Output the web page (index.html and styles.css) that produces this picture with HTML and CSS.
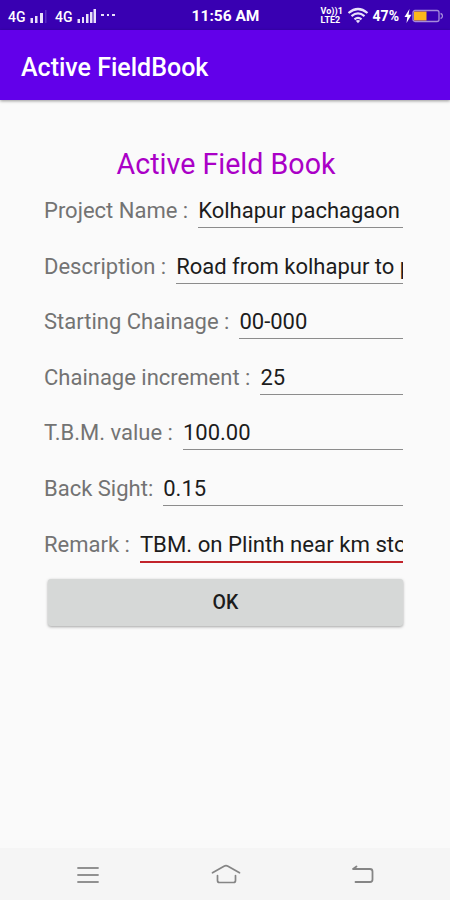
FILE: index.html
```html
<!DOCTYPE html>
<html lang="en">
<head>
  <meta charset="UTF-8" />
  <meta name="viewport" content="width=device-width, initial-scale=1.0"/>
  <title>Active FieldBook</title>
  <link rel="stylesheet" href="styles.css">
</head>
<body>
  <!-- Status bar -->
  <div class="status-bar">
    <div class="status-left">
      <span class="network">4G</span>
      <svg class="signal" width="18" height="16" viewBox="0 0 18 16">
        <path d="M0.500 10h2.500v5h-2.500zM5 8h2.500v7h-2.500zM10 5h3v10h-3z" fill="#e8e0fa"/>
        <path d="M15 2h1.500v13h-1.500z" fill="#5a2cc2"/>
      </svg>
      <span class="network second">4G</span>
      <svg class="signal" width="20" height="16" viewBox="0 0 20 16">
        <path d="M0.500 11h2.500v4h-2.500zM5 9h2v6h-2zM9 6h2.500v9h-2.500zM13 4h2.500v11h-2.500zM16.500 1h2.500v14h-2.500z" fill="#e8e0fa"/>
      </svg>
      <span class="dots"><i></i><i></i><i></i></span>
    </div>
    <div class="clock">11:56 AM</div>
    <div class="status-right">
      <div class="volte"><span>Vo))1</span><span>LTE2</span></div>
      <svg class="wifi" width="22" height="17" viewBox="0 0 22 17">
        <g fill="none" stroke="#e8e0fa" stroke-width="2.200">
          <path d="M1.500 6q9.500-8 19 0"/>
          <path d="M4.500 9.200q6.500-5.500 13 0"/>
          <path d="M7.500 12.300q3.500-3 7 0"/>
        </g>
        <path d="M8.800 13.700q2.200-1.500 4.400 0l-2.200 2.500z" fill="#e8e0fa"/>
      </svg>
      <span class="percent">47%</span>
      <svg class="bolt" width="8" height="14" viewBox="0 0 8 14">
        <path d="M5.500 0L0.500 8h2.800l-0.800 6l5-8.200h-3z" fill="#fff"/>
      </svg>
      <svg class="battery" width="31" height="14" viewBox="0 0 31 14">
        <rect x="1" y="1.500" width="26" height="11" rx="2" fill="none" stroke="#a58bdc" stroke-width="1.300"/>
        <path d="M28.500 4.500q2 0.500 2 2.500t-2 2.500" fill="none" stroke="#a58bdc" stroke-width="1.300"/>
        <rect x="2" y="2.500" width="12.500" height="9" fill="#fcb81c"/>
      </svg>
    </div>
  </div>

  <header class="app-bar">
    <h1>Active FieldBook</h1>
  </header>

  <!-- Form -->
  <main class="content">
    <h2 class="title">Active Field Book</h2>
    <form class="field-form">
      <div class="row">
        <label for="project">Project Name :</label>
        <input type="text" id="project" value="Kolhapur pachagaon">
      </div>
      <div class="row">
        <label for="description">Description :</label>
        <input type="text" id="description" value="Road from kolhapur to pachagaon">
      </div>
      <div class="row">
        <label for="chainage">Starting Chainage :</label>
        <input type="text" id="chainage" value="00-000">
      </div>
      <div class="row">
        <label for="increment">Chainage increment :</label>
        <input type="text" id="increment" value="25">
      </div>
      <div class="row">
        <label for="tbm">T.B.M. value :</label>
        <input type="text" id="tbm" value="100.00">
      </div>
      <div class="row">
        <label for="backsight">Back Sight:</label>
        <input type="text" id="backsight" value="0.15">
      </div>
      <div class="row">
        <label for="remark">Remark :</label>
        <input type="text" id="remark" class="active" value="TBM. on Plinth near km stone">
      </div>
      <button type="button" class="ok-button">OK</button>
    </form>
  </main>

  <!-- Navigation bar -->
  <nav class="nav-bar">
    <svg width="30" height="24" viewBox="0 0 30 24">
      <path d="M5 5h20M5 12h20M5 19h20" fill="none" stroke="#919191" stroke-width="1.800" stroke-linecap="round"/>
    </svg>
    <svg width="30" height="24" viewBox="0 0 30 24">
      <g fill="none" stroke="#858585" stroke-width="1.700" stroke-linecap="round" stroke-linejoin="round">
        <path d="M1.500 9.800L13 3.200q2-1 4 0l11.500 6.600"/>
        <path d="M6.500 12.500v5q0 2 2 2h14q2 0 2-2v-5"/>
      </g>
    </svg>
    <svg width="30" height="24" viewBox="0 0 30 24">
      <path d="M8.500 3.500L5 6h17q2.500 0 2.500 2.500v8q0 2.500-2.500 2.500h-14.500" fill="none" stroke="#858585" stroke-width="1.800" stroke-linecap="round" stroke-linejoin="round"/>
    </svg>
  </nav>
</body>
</html>
```
FILE: styles.css
```css
* {
  margin: 0;
  padding: 0;
  box-sizing: border-box;
}

html, body {
  height: 100%;
}

body {
  font-family: Roboto, sans-serif;
  display: flex;
  flex-direction: column;
  background: #fafafa;
  overflow: hidden;
}

/* Status bar */
.status-bar {
  display: grid;
  grid-template-columns: 1fr auto 1fr;
  align-items: center;
  height: 30px;
  padding: 2px 7px 0 8px;
  background: #3900b2;
  color: #fff;
}

.status-left,
.status-right {
  display: flex;
  align-items: center;
}

.status-right {
  justify-content: flex-end;
}

.network {
  width: 19px;
  margin-right: 3px;
  font-size: 14px;
  font-weight: 500;
  line-height: 16px;
  padding-top: 2px;
}

.network.second {
  margin-left: 7px;
}

.signal {
  margin-top: -1px;
}

.dots {
  display: flex;
  gap: 3px;
  margin: -3px 0 0 4px;
}

.dots i {
  width: 2.5px;
  height: 2px;
  background: #e8e0fa;
}

.clock {
  font-size: 15.5px;
  font-weight: 700;
}

.volte {
  display: flex;
  flex-direction: column;
  width: 24px;
  margin-right: 2px;
  font-size: 9px;
  font-weight: 700;
  line-height: 9px;
  white-space: nowrap;
}

.wifi {
  margin-top: -1px;
}

.percent {
  margin: 0 5px 0 4px;
  font-size: 14px;
  font-weight: 700;
}

.app-bar {
  display: flex;
  align-items: center;
  height: 70px;
  padding: 4px 21px 0;
  background: #6200ea;
  box-shadow: 0 1px 3px rgba(0, 0, 0, 0.4);
}

.app-bar h1 {
  color: #fff;
  font-size: 25px;
  font-weight: 500;
}

/* Form */
.content {
  flex: 1;
  padding: 46px 47px 0 44px;
}

.title {
  padding-left: 5px;
  color: #aa00c7;
  font-size: 28.6px;
  font-weight: 400;
  line-height: 36px;
  text-align: center;
}

.row {
  display: flex;
  align-items: flex-start;
  gap: 10px;
  height: 55.6px;
  padding-top: 11px;
}

.row label {
  flex-shrink: 0;
  color: #737373;
  font-size: 22px;
  line-height: 35px;
}

.row input {
  flex: 1;
  min-width: 0;
  height: 35px;
  padding-top: 1px;
  border: none;
  border-bottom: 1px solid #8c8c8c;
  outline: none;
  background: transparent;
  color: #1c1c1c;
  font-family: inherit;
  font-size: 22px;
}

.row input.active {
  height: 36px;
  border-bottom: 2px solid #c2232b;
  font-size: 22.2px;
}

.ok-button {
  display: block;
  width: 355px;
  height: 47px;
  margin: 8px 0 0 4px;
  border: none;
  border-radius: 3px;
  background: #d6d8d7;
  box-shadow: 0 1px 3px rgba(0, 0, 0, 0.35);
  color: #1c1c1c;
  font-family: inherit;
  font-size: 19.5px;
  font-weight: 500;
}

/* Navigation bar */
.nav-bar {
  display: flex;
  justify-content: space-between;
  align-items: center;
  height: 52px;
  padding: 2px 72px 0 73px;
  background: #f5f5f5;
}
```
